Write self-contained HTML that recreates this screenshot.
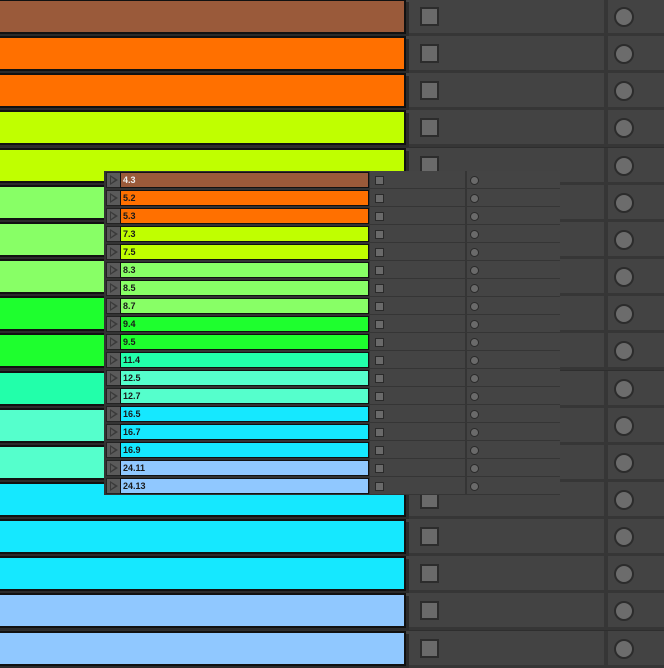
<!DOCTYPE html>
<html><head><meta charset="utf-8"><style>
*{margin:0;padding:0;box-sizing:border-box}
body{width:664px;height:665px;overflow:hidden;background:#2e2e2e;position:relative;font-family:"Liberation Sans",sans-serif}
.r{position:absolute;left:0;width:664px;height:37px}
.r .g{position:absolute;left:0;top:0;width:409px;height:37px;background:#2b2b2b;border-top:3px solid #444}
.r .b{position:absolute;left:-4px;top:0;width:410px;height:35px;border:2px solid #111}
.r .c{position:absolute;left:409px;top:0;width:255px;height:37px;background:#434343;border-bottom:3px solid #363636}
.r .v{position:absolute;left:604px;top:0;width:4px;height:37px;background:#363636}
.r .s{position:absolute;left:420px;top:8px;width:19px;height:19px;background:#6a6a6a;border:2px solid #2c2c2c}
.r .o{position:absolute;left:614px;top:8px;width:20px;height:20px;border-radius:50%;background:#6c6c6c;border:2px solid #2c2c2c}
#p{position:absolute;left:104px;top:171px;width:456px;height:324px;background:#333}
.q{position:absolute;left:0;width:456px;height:18px}
.q .pl{position:absolute;left:2px;top:1px;width:15px;height:16px;background:#5a5a5a;border:1px solid #222}
.q .pl:after{content:"";position:absolute;left:3px;top:2px;border-left:8px solid #3a3a3a;border-top:5px solid transparent;border-bottom:5px solid transparent}
.q .pl:before{content:"";position:absolute;left:4px;top:4px;border-left:4px solid #5a5a5a;border-top:3px solid transparent;border-bottom:3px solid transparent;z-index:1}
.q .b{position:absolute;left:16px;top:1px;width:249px;height:16px;border:1px solid #111;font-size:9px;font-weight:bold;line-height:14px;padding-left:2px;color:#1a1a1a}
.q .c{position:absolute;left:266px;top:0;width:190px;height:18px;background:#444;border-bottom:1px solid #353535}
.q .v{position:absolute;left:361px;top:0;width:2px;height:18px;background:#353535}
.q .s{position:absolute;left:271px;top:5px;width:9px;height:9px;background:#6a6a6a;border:1px solid #2a2a2a}
.q .o{position:absolute;left:366px;top:5px;width:9px;height:9px;border-radius:50%;background:#6a6a6a;border:1px solid #2a2a2a}
</style></head><body>
<div class="r" style="top:-1px"><div class="g"></div><div class="b" style="background:#9a5a3a"></div><div class="c"></div><div class="v"></div><div class="s"></div><div class="o"></div></div>
<div class="r" style="top:36px"><div class="g"></div><div class="b" style="background:#ff7000"></div><div class="c"></div><div class="v"></div><div class="s"></div><div class="o"></div></div>
<div class="r" style="top:73px"><div class="g"></div><div class="b" style="background:#ff7000"></div><div class="c"></div><div class="v"></div><div class="s"></div><div class="o"></div></div>
<div class="r" style="top:110px"><div class="g"></div><div class="b" style="background:#c0ff00"></div><div class="c"></div><div class="v"></div><div class="s"></div><div class="o"></div></div>
<div class="r" style="top:148px"><div class="g"></div><div class="b" style="background:#c0ff00"></div><div class="c"></div><div class="v"></div><div class="s"></div><div class="o"></div></div>
<div class="r" style="top:185px"><div class="g"></div><div class="b" style="background:#88ff66"></div><div class="c"></div><div class="v"></div><div class="s"></div><div class="o"></div></div>
<div class="r" style="top:222px"><div class="g"></div><div class="b" style="background:#88ff66"></div><div class="c"></div><div class="v"></div><div class="s"></div><div class="o"></div></div>
<div class="r" style="top:259px"><div class="g"></div><div class="b" style="background:#88ff66"></div><div class="c"></div><div class="v"></div><div class="s"></div><div class="o"></div></div>
<div class="r" style="top:296px"><div class="g"></div><div class="b" style="background:#1eff2e"></div><div class="c"></div><div class="v"></div><div class="s"></div><div class="o"></div></div>
<div class="r" style="top:333px"><div class="g"></div><div class="b" style="background:#1eff2e"></div><div class="c"></div><div class="v"></div><div class="s"></div><div class="o"></div></div>
<div class="r" style="top:371px"><div class="g"></div><div class="b" style="background:#22ffaa"></div><div class="c"></div><div class="v"></div><div class="s"></div><div class="o"></div></div>
<div class="r" style="top:408px"><div class="g"></div><div class="b" style="background:#55ffcc"></div><div class="c"></div><div class="v"></div><div class="s"></div><div class="o"></div></div>
<div class="r" style="top:445px"><div class="g"></div><div class="b" style="background:#55ffcc"></div><div class="c"></div><div class="v"></div><div class="s"></div><div class="o"></div></div>
<div class="r" style="top:482px"><div class="g"></div><div class="b" style="background:#15e8ff"></div><div class="c"></div><div class="v"></div><div class="s"></div><div class="o"></div></div>
<div class="r" style="top:519px"><div class="g"></div><div class="b" style="background:#15e8ff"></div><div class="c"></div><div class="v"></div><div class="s"></div><div class="o"></div></div>
<div class="r" style="top:556px"><div class="g"></div><div class="b" style="background:#15e8ff"></div><div class="c"></div><div class="v"></div><div class="s"></div><div class="o"></div></div>
<div class="r" style="top:593px"><div class="g"></div><div class="b" style="background:#90c8ff"></div><div class="c"></div><div class="v"></div><div class="s"></div><div class="o"></div></div>
<div class="r" style="top:631px"><div class="g"></div><div class="b" style="background:#90c8ff"></div><div class="c"></div><div class="v"></div><div class="s"></div><div class="o"></div></div>

<div id="p">
<div class="q" style="top:0"><div class="pl"></div><div class="b" style="background:#9a5a3a;color:#eee">4.3</div><div class="c"></div><div class="v"></div><div class="s"></div><div class="o"></div></div>
<div class="q" style="top:18px"><div class="pl"></div><div class="b" style="background:#ff7000">5.2</div><div class="c"></div><div class="v"></div><div class="s"></div><div class="o"></div></div>
<div class="q" style="top:36px"><div class="pl"></div><div class="b" style="background:#ff7000">5.3</div><div class="c"></div><div class="v"></div><div class="s"></div><div class="o"></div></div>
<div class="q" style="top:54px"><div class="pl"></div><div class="b" style="background:#c0ff00">7.3</div><div class="c"></div><div class="v"></div><div class="s"></div><div class="o"></div></div>
<div class="q" style="top:72px"><div class="pl"></div><div class="b" style="background:#c0ff00">7.5</div><div class="c"></div><div class="v"></div><div class="s"></div><div class="o"></div></div>
<div class="q" style="top:90px"><div class="pl"></div><div class="b" style="background:#88ff66">8.3</div><div class="c"></div><div class="v"></div><div class="s"></div><div class="o"></div></div>
<div class="q" style="top:108px"><div class="pl"></div><div class="b" style="background:#88ff66">8.5</div><div class="c"></div><div class="v"></div><div class="s"></div><div class="o"></div></div>
<div class="q" style="top:126px"><div class="pl"></div><div class="b" style="background:#88ff66">8.7</div><div class="c"></div><div class="v"></div><div class="s"></div><div class="o"></div></div>
<div class="q" style="top:144px"><div class="pl"></div><div class="b" style="background:#1eff2e">9.4</div><div class="c"></div><div class="v"></div><div class="s"></div><div class="o"></div></div>
<div class="q" style="top:162px"><div class="pl"></div><div class="b" style="background:#1eff2e">9.5</div><div class="c"></div><div class="v"></div><div class="s"></div><div class="o"></div></div>
<div class="q" style="top:180px"><div class="pl"></div><div class="b" style="background:#22ffaa">11.4</div><div class="c"></div><div class="v"></div><div class="s"></div><div class="o"></div></div>
<div class="q" style="top:198px"><div class="pl"></div><div class="b" style="background:#55ffcc">12.5</div><div class="c"></div><div class="v"></div><div class="s"></div><div class="o"></div></div>
<div class="q" style="top:216px"><div class="pl"></div><div class="b" style="background:#55ffcc">12.7</div><div class="c"></div><div class="v"></div><div class="s"></div><div class="o"></div></div>
<div class="q" style="top:234px"><div class="pl"></div><div class="b" style="background:#15e8ff">16.5</div><div class="c"></div><div class="v"></div><div class="s"></div><div class="o"></div></div>
<div class="q" style="top:252px"><div class="pl"></div><div class="b" style="background:#15e8ff">16.7</div><div class="c"></div><div class="v"></div><div class="s"></div><div class="o"></div></div>
<div class="q" style="top:270px"><div class="pl"></div><div class="b" style="background:#15e8ff">16.9</div><div class="c"></div><div class="v"></div><div class="s"></div><div class="o"></div></div>
<div class="q" style="top:288px"><div class="pl"></div><div class="b" style="background:#90c8ff">24.11</div><div class="c"></div><div class="v"></div><div class="s"></div><div class="o"></div></div>
<div class="q" style="top:306px"><div class="pl"></div><div class="b" style="background:#90c8ff">24.13</div><div class="c"></div><div class="v"></div><div class="s"></div><div class="o"></div></div>
</div>
</body></html>
